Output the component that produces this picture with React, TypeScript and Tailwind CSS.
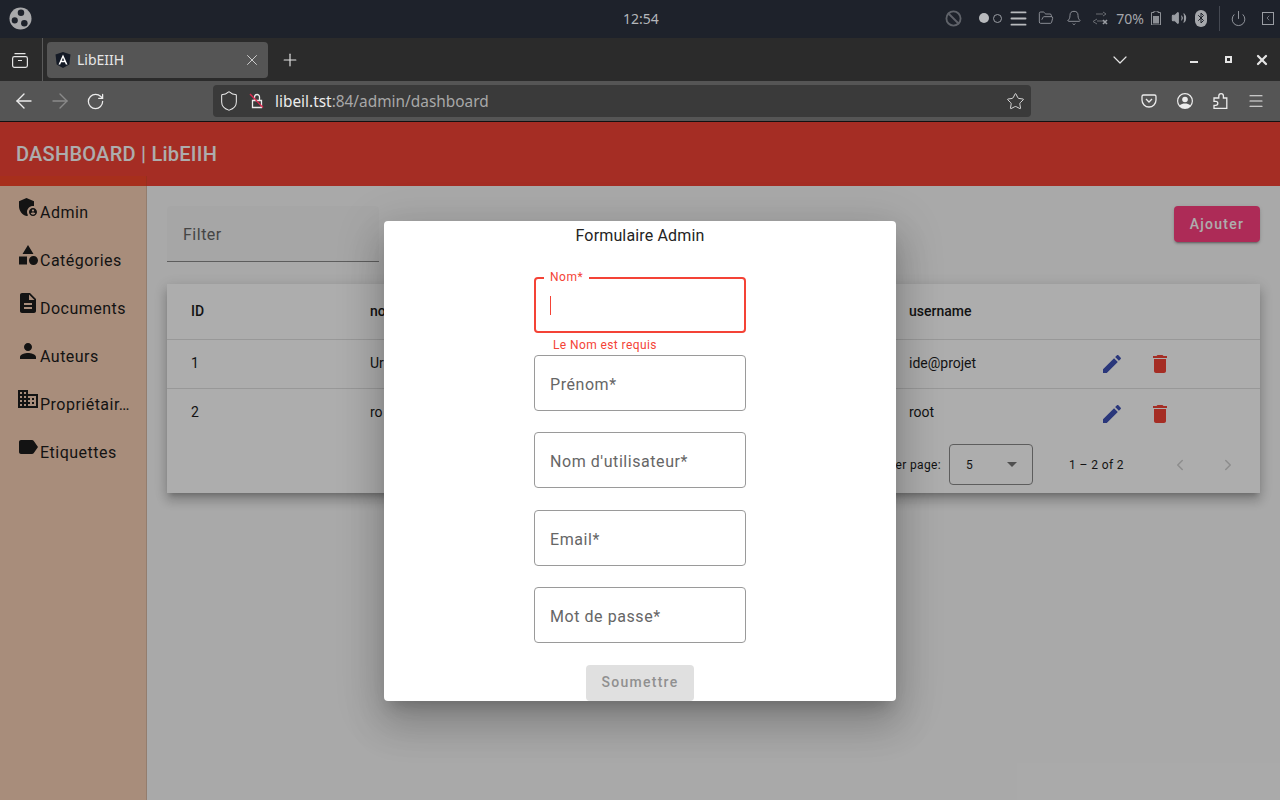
import { Bluetooth, ChevronDown, ChevronLeft, ChevronRight, Plus, RotateCw, ArrowLeft, ArrowRight, Shield, Star, X, Menu, Bell, FolderOpen, Ban, Power, Volume2 } from "lucide-react";

function MatIcon({ d, className }: { d: string; className?: string }) {
  return (
    <svg viewBox="0 0 24 24" fill="currentColor" className={className}>
      <path d={d} />
    </svg>
  );
}

const icons = {
  admin:
    "M17 11c.34 0 .67.04 1 .09V6.27L10.5 3 3 6.27v4.91c0 4.54 3.2 8.79 7.5 9.82.55-.13 1.08-.32 1.6-.55-.69-.98-1.1-2.17-1.1-3.45 0-3.31 2.69-6 6-6zm0 2c-2.21 0-4 1.79-4 4s1.79 4 4 4 4-1.79 4-4-1.79-4-4-4zm0 1.38c.62 0 1.12.51 1.12 1.12s-.51 1.12-1.12 1.12-1.12-.51-1.12-1.12.5-1.12 1.12-1.12zm0 5.37c-.93 0-1.74-.46-2.24-1.17.05-.72 1.51-1.08 2.24-1.08s2.19.36 2.24 1.08c-.5.71-1.31 1.17-2.24 1.17z",
  category: "M12 2l-5.5 9h11L12 2zm5.5 11c-2.49 0-4.5 2.01-4.5 4.5s2.01 4.5 4.5 4.5 4.5-2.01 4.5-4.5-2.01-4.5-4.5-4.5zM3 13.5h8v8H3v-8z",
  doc: "M14 2H6c-1.1 0-1.99.9-1.99 2L4 20c0 1.1.89 2 1.99 2H18c1.1 0 2-.9 2-2V8l-6-6zm2 16H8v-2h8v2zm0-4H8v-2h8v2zm-3-5V3.5L18.5 9H13z",
  person: "M12 12c2.21 0 4-1.79 4-4s-1.79-4-4-4-4 1.79-4 4 1.79 4 4 4zm0 2c-2.67 0-8 1.34-8 4v2h16v-2c0-2.66-5.33-4-8-4z",
  domain:
    "M12 7V3H2v18h20V7H12zM6 19H4v-2h2v2zm0-4H4v-2h2v2zm0-4H4V9h2v2zm0-4H4V5h2v2zm4 12H8v-2h2v2zm0-4H8v-2h2v2zm0-4H8V9h2v2zm0-4H8V5h2v2zm10 12h-8v-2h2v-2h-2v-2h2v-2h-2V9h8v10zm-2-8h-2v2h2v-2zm0 4h-2v2h2v-2z",
  label: "M17.63 5.84C17.27 5.33 16.67 5 16 5L5 5.01C3.9 5.01 3 5.9 3 7v10c0 1.1.9 1.99 2 1.99L16 19c.67 0 1.27-.33 1.63-.84L22 12l-4.37-6.16z",
  edit: "M3 17.25V21h3.75L17.81 9.94l-3.75-3.75L3 17.25zM20.71 7.04c.39-.39.39-1.02 0-1.41l-2.34-2.34c-.39-.39-1.02-.39-1.41 0l-1.83 1.83 3.75 3.75 1.83-1.83z",
  trash: "M6 19c0 1.1.9 2 2 2h8c1.1 0 2-.9 2-2V7H6v12zM19 4h-3.5l-1-1h-5l-1 1H5v2h14V4z",
};

const navItems = [
  { label: "Admin", icon: icons.admin },
  { label: "Catégories", icon: icons.category },
  { label: "Documents", icon: icons.doc },
  { label: "Auteurs", icon: icons.person },
  { label: "Propriétair…", icon: icons.domain },
  { label: "Etiquettes", icon: icons.label },
];

const rows = [
  { id: "1", nom: "Uri", username: "ide@projet" },
  { id: "2", nom: "ro", username: "root" },
];

function SystemBar() {
  return (
    <div className="flex h-[38px] items-center justify-between bg-[#1e222b] pb-[2px] pl-[9px] pr-[6px] text-[#9a9da3]">
      <svg viewBox="0 0 24 24" className="mt-[1px] h-[23px] w-[23px]">
        <circle cx="12" cy="12" r="11.5" fill="#a9a9ab" />
        <circle cx="12.500" cy="6" r="3.400" fill="#1e222b" />
        <circle cx="6" cy="14" r="3.200" fill="#1e222b" />
        <circle cx="16" cy="17" r="3.400" fill="#1e222b" />
      </svg>
      <span className="absolute left-[623px] text-[14px] text-[#b4b6ba]">12:54</span>
      <div className="flex items-center">
        <Ban className="h-[17px] w-[17px] text-[#5f6269]" strokeWidth={2.6} />
        <span className="ml-[17px] h-[10px] w-[10px] rounded-full bg-[#b8babd]" />
        <span className="ml-[4px] h-[9px] w-[9px] rounded-full border border-[#9a9da3]" />
        <Menu className="ml-[6px] h-[21px] w-[21px] text-[#b8babd]" strokeWidth={2.2} />
        <FolderOpen className="ml-[9px] h-[16px] w-[16px]" strokeWidth={1.3} />
        <Bell className="ml-[12px] h-[16px] w-[16px]" strokeWidth={1.3} />
        <svg viewBox="0 0 18 14" fill="none" stroke="#6a6d73" className="ml-[9px] h-[14px] w-[18px]">
          <path d="M5 3h7M12 1l3 2-3 2M13 10H6M6 8l-4 2.500 4 2.500" />
          <path d="M12 9l4 4M16 9l-4 4" stroke="#9a9da3" strokeWidth="1.600" />
        </svg>
        <span className="ml-[7px] text-[14px] text-[#a5a7ab]">70%</span>
        <svg viewBox="0 0 10 14" className="ml-[7px] h-[14px] w-[10px]">
          <path d="M3 0h4v1.500h2.500V14H.5V1.500H3z" fill="none" stroke="#8d9096" />
          <rect x="2" y="5" width="6" height="7.500" fill="#8d9096" />
        </svg>
        <Volume2 className="ml-[10px] h-[16px] w-[16px]" strokeWidth={1.6} fill="currentColor" />
        <span className="ml-[8px] flex h-[17px] w-[12px] items-center justify-center rounded-full bg-[#a5a7ab]">
          <Bluetooth className="h-[12px] w-[12px] text-[#1e222b]" strokeWidth={2} />
        </span>
        <span className="ml-[12px] h-[25px] w-px bg-[#454952]" />
        <Power className="ml-[10px] h-[17px] w-[17px]" strokeWidth={1.3} />
        <span className="ml-[15px] flex h-[13px] w-[12px] items-center justify-center border border-[#9a9da3]">
          <ChevronLeft className="h-[8px] w-[8px]" />
        </span>
      </div>
    </div>
  );
}

function TabBar() {
  return (
    <div className="flex h-[43px] items-center bg-[#2b2b2b] text-[#e4e4e4]">
      <div className="flex h-full w-[43px] items-center justify-center border-r border-[#5a5a5a] pr-[2px]">
        <svg viewBox="0 0 16 16" fill="none" stroke="currentColor" strokeWidth="1.200" className="h-[16px] w-[16px]">
          <rect x=".6" y="4.600" width="14.800" height="10.800" rx="1.800" />
          <path d="M2.500 1.600h11M6 8.500h4" />
        </svg>
      </div>
      <div className="ml-[4px] flex h-[36px] w-[221px] items-center rounded-[4px] bg-[#555555] pl-[8px] pr-[7px]">
        <svg viewBox="0 0 16 16" className="h-[16px] w-[16px]">
          <path d="M8 0l7.500 2.600-1.200 9.800L8 16l-6.300-3.600L.5 2.600z" fill="#141a26" />
          <path d="M8 2.500L3.500 12.500h1.700l.9-2.300h3.800l.9 2.300h1.700zM6.800 8.700L8 5.800l1.200 2.900z" fill="#ffffff" />
        </svg>
        <span className="ml-[6px] flex-1 font-['Noto_Sans'] text-[14px] text-[#e6e6e6]">LibEIIH</span>
        <X className="h-[18px] w-[18px]" strokeWidth={1.1} />
      </div>
      <Plus className="ml-[12px] h-[20px] w-[20px]" strokeWidth={1.4} />
      <ChevronDown className="ml-[808px] h-[24px] w-[24px]" strokeWidth={1.2} />
      <span className="ml-[58px] mt-[4px] h-[2px] w-[8px] bg-[#e4e4e4]" />
      <span className="ml-[27px] h-[7px] w-[7px] border-2 border-[#e4e4e4]" />
      <X className="ml-[22px] h-[16px] w-[16px]" strokeWidth={3.4} />
    </div>
  );
}

function UrlBar() {
  return (
    <div className="flex h-[41px] items-center border-b border-[#111111] bg-[#555555] text-[#ececec]">
      <ArrowLeft className="ml-[12px] h-[24px] w-[24px]" strokeWidth={1.4} />
      <ArrowRight className="ml-[12px] h-[24px] w-[24px] text-[#8a8a8a]" strokeWidth={1.4} />
      <RotateCw className="ml-[14px] h-[19px] w-[19px]" strokeWidth={1.6} />
      <div className="ml-[108px] flex h-[32px] w-[818px] items-center rounded-[4px] bg-[#3a3a3a] pl-[5px] pr-[6px]">
        <Shield className="h-[22px] w-[22px]" strokeWidth={1.1} />
        <svg viewBox="0 0 16 16" fill="none" stroke="#ececec" className="ml-[9px] h-[16px] w-[16px]">
          <path d="M3.500 7.500h9v7h-9zM5.500 7.500V4a2.500 2.500 0 0 1 5 0v3.500" strokeWidth="1.300" />
          <path d="M1 1l13 13.500" stroke="#e22850" strokeWidth="1.300" />
        </svg>
        <span className="ml-[10px] mt-[2px] flex-1 font-['Noto_Sans'] text-[15.4px]">
          libeil.tst<span className="text-[#a8a8a8]">:84/admin/dashboard</span>
        </span>
        <Star className="h-[19px] w-[19px]" strokeWidth={1.1} />
      </div>
      <svg viewBox="0 0 16 16" fill="none" stroke="#ececec" strokeWidth="1.300" className="ml-[110px] h-[16px] w-[16px]">
        <path d="M2.500 2h11A1.500 1.500 0 0 1 15 3.500V7a7 7 0 0 1-14 0V3.500A1.500 1.500 0 0 1 2.500 2z" />
        <path d="M5 6l3 3 3-3" />
      </svg>
      <svg viewBox="0 0 16 16" className="ml-[20px] h-[16px] w-[16px]" fill="#ececec">
        <path fillRule="evenodd" d="M8 0a8 8 0 1 0 0 16A8 8 0 0 0 8 0zm0 1.300a6.700 6.700 0 0 1 5.200 10.900C12 11.100 10 10.500 8 10.500s-4 .6-5.200 1.700A6.700 6.700 0 0 1 8 1.300z" />
        <circle cx="8" cy="6.500" r="2.800" />
      </svg>
      <svg viewBox="0 0 15 16" fill="none" stroke="#ececec" strokeWidth="1.300" className="ml-[20px] h-[16px] w-[15px]">
        <path d="M1 5h4.800V3a2.300 2.300 0 0 1 4.600 0v2h3.400v10.300H1v-3h1.800a2 2 0 0 0 0-4H1z" />
      </svg>
      <Menu className="ml-[19px] h-[18px] w-[18px]" strokeWidth={1.5} />
    </div>
  );
}

function Sidebar() {
  return (
    <aside className="relative z-10 flex w-[147px] shrink-0 flex-col border-r border-[#d9b9a3] bg-[#f8d0b6] pl-[16px] pt-[1px] text-[#1c1c1c]">
      <div className="absolute -right-px -top-[10px] left-0 h-[10px] border-r border-[#e0462c] bg-[#f7462a]" />
      {navItems.map((item) => (
        <div key={item.label} className="flex h-[48px] items-start pt-[8px]">
          <MatIcon d={item.icon} className="h-[24px] w-[24px] shrink-0" />
          <span className="mt-[8px] font-['Roboto'] text-[16px] leading-[20px] tracking-[0.48px]">{item.label}</span>
        </div>
      ))}
    </aside>
  );
}

function DataTable() {
  return (
    <div className="mt-[22px] w-[1093px] bg-white font-['Roboto'] text-[14px] text-[#1c1c1c] shadow-[0_5px_5px_-3px_rgba(0,0,0,0.2),0_8px_10px_1px_rgba(0,0,0,0.14),0_3px_14px_2px_rgba(0,0,0,0.12)]">
      <div className="grid h-[56px] grid-cols-[179px_539px_191px_1fr] items-center border-b border-[#e0e0e0] pl-[24px] font-medium">
        <span>ID</span>
        <span>nom</span>
        <span className="col-span-2">username</span>
      </div>
      {rows.map((row, i) => (
        <div
          key={row.id}
          className={i === 0 ? "grid h-[49px] grid-cols-[179px_539px_191px_1fr] items-center border-b border-[#e0e0e0] pb-[2px] pl-[24px]" : "grid h-[49px] grid-cols-[179px_539px_191px_1fr] items-center pb-[2px] pl-[24px]"}
        >
          <span>{row.id}</span>
          <span>{row.nom}</span>
          <span>{row.username}</span>
          <div className="mt-[2px] flex items-center gap-[24px]">
            <MatIcon d={icons.edit} className="h-[24px] w-[24px] text-[#3f51b5]" />
            <MatIcon d={icons.trash} className="h-[24px] w-[24px] text-[#f44336]" />
          </div>
        </div>
      ))}
      <div className="flex h-[55px] items-center justify-end pb-[2px] pr-[23px] text-[12px]">
        <span className="tracking-[0.35px]">Items per page:</span>
        <div className="ml-[8px] flex h-[41px] w-[84px] items-center justify-between rounded-[4px] border border-[#8a8a8a] pl-[16px] pr-[15px]">
          <span>5</span>
          <span className="h-0 w-0 border-x-[5px] border-t-[5px] border-x-transparent border-t-[#757575]" />
        </div>
        <span className="ml-[36px] tracking-[0.4px]">1 – 2 of 2</span>
        <ChevronLeft className="ml-[47px] h-[18px] w-[18px] text-[#d0d0d0]" />
        <ChevronRight className="ml-[30px] h-[18px] w-[18px] text-[#d0d0d0]" />
      </div>
    </div>
  );
}

function Field({ label, className }: { label: string; className: string }) {
  return (
    <div className={`${className} flex h-[56px] w-[212px] items-center rounded-[4px] border border-[#9a9a9a] pl-[15px] pt-[4px] text-[16px] tracking-[0.56px] text-[#666666]`}>
      {label}
    </div>
  );
}

function AdminDialog() {
  return (
    <div className="flex h-[480px] w-[512px] flex-col items-center rounded-[4px] bg-white font-['Roboto'] shadow-[0_11px_15px_-7px_rgba(0,0,0,0.2),0_24px_38px_3px_rgba(0,0,0,0.14),0_9px_46px_8px_rgba(0,0,0,0.12)]">
      <h2 className="mt-[5px] text-[16px] leading-[20px] tracking-[0.15px] text-[#242424]">Formulaire Admin</h2>
      <div className="relative mt-[31px] flex h-[56px] w-[212px] items-center rounded-[4px] border-2 border-[#f44336] pl-[14px]">
        <span className="absolute -top-[9px] left-[8px] bg-white px-[6px] text-[12px] leading-[14px] tracking-[0.5px] text-[#f44336]">Nom*</span>
        <span className="h-[19px] w-px bg-[#f44336]" />
      </div>
      <p className="h-[22px] w-[212px] pl-[19px] pt-[5px] text-[12px] leading-[14px] tracking-[0.4px] text-[#f44336]">Le Nom est requis</p>
      <Field label="Prénom*" className="mb-[21px]" />
      <Field label="Nom d'utilisateur*" className="mb-[22px]" />
      <Field label="Email*" className="mb-[21px]" />
      <Field label="Mot de passe*" className="mb-[22px]" />
      <button className="h-[36px] w-[108px] rounded-[4px] bg-[#e0e0e0] pb-[2px] text-[14px] font-medium tracking-[1.25px] text-[#909090]">Soumettre</button>
    </div>
  );
}

export default function App() {
  return (
    <div className="flex h-[800px] w-[1280px] flex-col overflow-hidden bg-[#fafafa] font-['Noto_Sans']">
      <SystemBar />
      <TabBar />
      <UrlBar />
      <div className="relative flex min-h-0 flex-1 flex-col">
        <header className="z-10 flex h-[64px] shrink-0 items-center bg-[#f44336] pl-[16px] font-['Roboto'] text-[20px] font-medium tracking-[0.25px] text-white">
          DASHBOARD | LibEIIH
        </header>
        <div className="flex min-h-0 flex-1">
          <Sidebar />
          <main className="flex-1 pl-[20px] pt-[20px] font-['Roboto']">
            <div className="flex w-[1093px] items-start justify-between">
              <div className="flex h-[56px] w-[212px] items-center rounded-t-[4px] border-b border-[#8a8a8a] bg-[#f5f5f5] pl-[16px] pt-[2px] text-[16px] tracking-[0.5px] text-[#666666]">
                Filter
              </div>
              <button className="h-[36px] w-[86px] rounded-[4px] bg-[#ff4081] text-[14px] font-medium tracking-[1.25px] text-white shadow-[0_3px_1px_-2px_rgba(0,0,0,0.2),0_2px_2px_rgba(0,0,0,0.14),0_1px_5px_rgba(0,0,0,0.12)]">
                Ajouter
              </button>
            </div>
            <DataTable />
          </main>
        </div>
        <div className="absolute inset-0 z-20 flex items-center justify-center bg-black/[0.32]">
          <AdminDialog />
        </div>
      </div>
    </div>
  );
}
